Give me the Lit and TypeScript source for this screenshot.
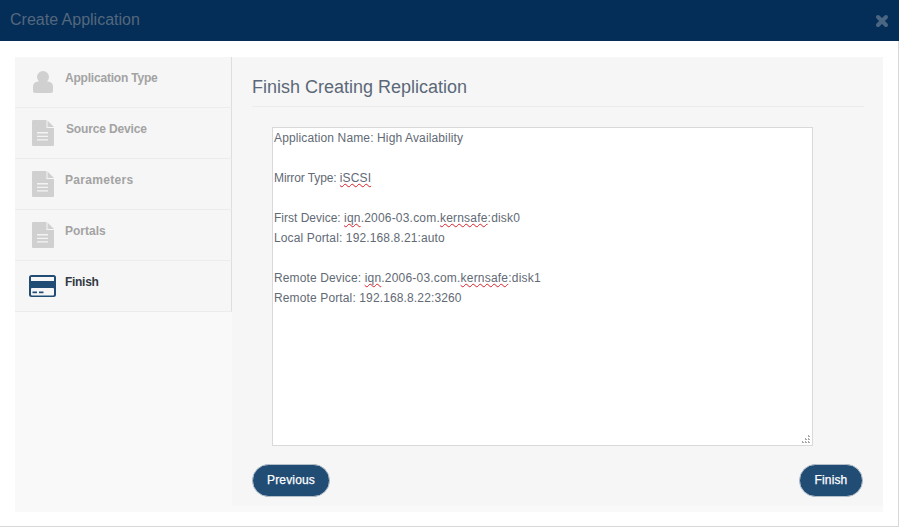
import { LitElement, html, css, svg } from "lit";
import { customElement } from "lit/decorators.js";

const userIcon = svg`<svg class="ic" width="20" height="22" viewBox="0 0 20 22"><circle cx="10" cy="6" r="6" fill="#d0d0d0"/><path d="M5 10.500h10c3 .3 5 2 5 5V20a2 2 0 0 1-2 2H2a2 2 0 0 1-2-2v-4.500c0-3 2-4.700 5-5z" fill="#d0d0d0"/></svg>`;
const docIcon = svg`<svg class="ic" width="22" height="26" viewBox="0 0 22 26"><path d="M1 0h13.500v8h7.500v17a1 1 0 0 1-1 1H1a1 1 0 0 1-1-1V1a1 1 0 0 1 1-1z" fill="#d0d0d0"/><path d="M15.500 0.500l6.500 6.500h-6.500z" fill="#d0d0d0"/><path d="M5 12h11v1.400H5zM5 15.700h11v1.400H5zM5 19.200h11v1.400H5z" fill="#f3f3f3"/></svg>`;
const cardIcon = svg`<svg class="ic" width="27" height="22" viewBox="0 0 27 22"><rect width="27" height="22" rx="2.500" fill="#214d75"/><rect x="2" y="2" width="23" height="4" fill="#f6f6f6"/><rect x="2" y="13" width="23" height="7.500" rx="1" fill="#f6f6f6"/><rect x="3.500" y="16.500" width="4.500" height="1.700" fill="#214d75"/><rect x="10" y="16.500" width="4.500" height="1.700" fill="#214d75"/></svg>`;

interface Step { label: string; icon: unknown; cls: string; }
const steps: Step[] = [
  { label: "Application Type", icon: userIcon, cls: "user tight" },
  { label: "Source Device", icon: docIcon, cls: "doc src" },
  { label: "Parameters", icon: docIcon, cls: "doc wide" },
  { label: "Portals", icon: docIcon, cls: "doc" },
  { label: "Finish", icon: cardIcon, cls: "card active" },
];

@customElement("app-root")
export class AppRoot extends LitElement {
  static styles = css`
    :host { display: block; width: 899px; height: 527px; font-family: "Liberation Sans", Arial, sans-serif; background: #fff; }
    .modal { box-sizing: border-box; width: 899px; height: 527px; display: flex; flex-direction: column; border-right: 1px solid #d9d9d9; border-bottom: 1px solid #d9d9d9; }
    .head { height: 41px; flex: none; background: #042e58; display: flex; align-items: center; justify-content: space-between; padding: 0 10px; box-sizing: border-box; margin-right: -1px; }
    .title { font-size: 16px; color: #54677c; position: relative; top: -1px; }
    .x { width: 14px; height: 14px; display: block; }
    .body { flex: 1; padding: 16px 15px 14px; display: flex; min-height: 0; }
    .panel { flex: 1; display: flex; background: #f9f9f9; }
    .side { width: 217px; flex: none; }
    .step { box-sizing: border-box; height: 51px; background: #f6f6f6; border-bottom: 1px solid #ececec; border-right: 1px solid #dedede; display: flex; align-items: flex-start; }
    .icw { flex: none; box-sizing: border-box; }
    .ic { display: block; }
    .user .icw { width: 50px; padding: 14px 0 0 18px; }
    .doc .icw { width: 51px; padding: 12px 0 0 17px; }
    .card .icw { width: 50px; padding: 14px 0 0 14px; }
    .lbl { font-size: 12px; font-weight: bold; color: #a3a3a3; padding-top: 14px; line-height: 14px; }
    .doc .lbl { margin-left: -1px; }
    .src .lbl { margin-left: 0; letter-spacing: -0.15px; }
    .tight .lbl { letter-spacing: -0.2px; }
    .wide .lbl { letter-spacing: 0.3px; }
    .active .lbl { color: #333a44; letter-spacing: -0.3px; }
    .main { flex: 1; background: #f6f6f6; margin-bottom: 6px; padding: 19px 19px 0 20px; display: flex; flex-direction: column; min-width: 0; }
    h2 { margin: 0; font-size: 18px; font-weight: normal; color: #5b6878; line-height: 22px; padding-bottom: 8px; border-bottom: 1px solid #ececec; }
    .box { position: relative; box-sizing: border-box; width: 541px; height: 319px; margin: 20px 0 0 20px; background: #fff; border: 1px solid #d9d9d9; padding: 0 1px; font-size: 12px; letter-spacing: 0.13px; line-height: 20px; color: #626a75; overflow: hidden; }
    .ln { height: 20px; white-space: pre; }
    .mt { letter-spacing: -0.1px; }
    .fd { letter-spacing: 0; }
    .wd { letter-spacing: 0.2px; }
    .sp { text-decoration: underline wavy #d9202a 1px; text-underline-offset: 1px; text-decoration-skip-ink: none; }
    .grip { position: absolute; right: 1px; bottom: 1px; display: block; }
    .btns { display: flex; justify-content: space-between; margin-top: 18px; padding-right: 1px; }
    button { box-sizing: border-box; height: 33px; border-radius: 17px; border: 1px solid #b4bfca; background: #214d75; color: #fff; font: 12px/14px "Liberation Sans", Arial, sans-serif; letter-spacing: 0.15px; -webkit-text-stroke: 0.25px #fff; padding: 0 0 2px; cursor: pointer; }
    .prev { width: 78px; }
    .fin { width: 64px; }
  `;

  render() {
    return html`<div class="modal">
      <div class="head">
        <span class="title">Create Application</span>
        <svg class="x" viewBox="0 0 14 14"><path d="M3 3l8 8M11 3l-8 8" stroke="#4b6683" stroke-width="4" stroke-linecap="round" fill="none"/></svg>
      </div>
      <div class="body"><div class="panel">
        <div class="side">
          ${steps.map((s) => html`<div class="step ${s.cls}"><div class="icw">${s.icon}</div><div class="lbl">${s.label}</div></div>`)}
        </div>
        <div class="main">
          <h2>Finish Creating Replication</h2>
          <div class="box">
            <div class="ln">Application Name: High Availability</div>
            <div class="ln"></div>
            <div class="ln"><span class="mt">Mirror Type: </span><span class="sp">iSCSI</span></div>
            <div class="ln"></div>
            <div class="ln"><span class="fd">First Device: </span><span class="wd"><span class="sp">iqn</span>.2006-03.com.<span class="sp">kernsafe</span>:disk0</span></div>
            <div class="ln">Local Portal: 192.168.8.21:auto</div>
            <div class="ln"></div>
            <div class="ln">Remote Device: <span class="wd"><span class="sp">iqn</span>.2006-03.com.<span class="sp">kernsafe</span>:disk1</span></div>
            <div class="ln">Remote Portal: 192.168.8.22:3260</div>
            <svg class="grip" width="10" height="10" viewBox="0 0 10 10" fill="#a8a8a8"><rect x="7" y="1" width="1" height="1"/><rect x="4" y="4" width="1" height="1"/><rect x="7" y="4" width="1" height="1"/><rect x="1" y="7" width="1" height="1"/><rect x="4" y="7" width="1" height="1"/><rect x="7" y="7" width="1" height="1"/><rect x="7" y="2" width="2" height="1"/><rect x="4" y="5" width="2" height="1"/><rect x="7" y="5" width="2" height="1"/><rect x="1" y="8" width="2" height="1"/><rect x="4" y="8" width="2" height="1"/><rect x="7" y="8" width="2" height="1"/></svg>
          </div>
          <div class="btns"><button class="prev">Previous</button><button class="fin">Finish</button></div>
        </div>
      </div></div>
    </div>`;
  }
}
